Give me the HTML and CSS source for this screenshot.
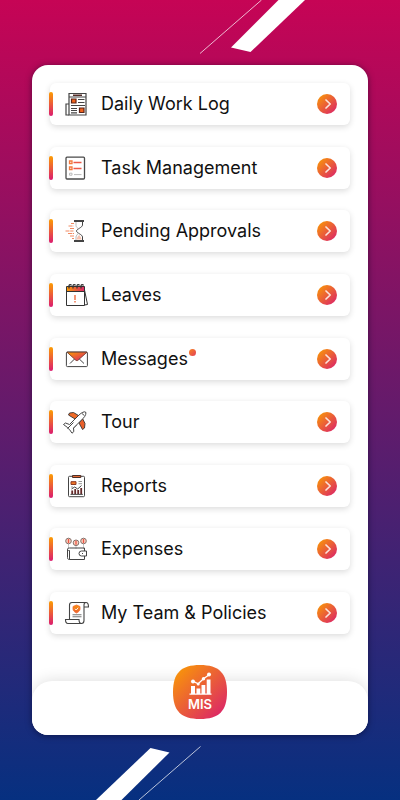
FILE: index.html
```html
<!DOCTYPE html>
<html lang="en">
<head>
<meta charset="utf-8">
<meta name="viewport" content="width=device-width, initial-scale=1">
<title>MIS</title>
<link rel="stylesheet" href="styles.css">
</head>
<body>
<svg class="defs" width="0" height="0" aria-hidden="true">
  <defs>
    <linearGradient id="warm" x1="0" y1="0" x2="1" y2="1">
      <stop offset="0" stop-color="#fb9f00"/><stop offset="1" stop-color="#d91c70"/>
    </linearGradient>
    <linearGradient id="warmV" gradientUnits="userSpaceOnUse" x1="0" y1="2" x2="0" y2="23">
      <stop offset="0" stop-color="#fb9f00"/><stop offset="1" stop-color="#d91c70"/>
    </linearGradient>
    <linearGradient id="warmH" gradientUnits="userSpaceOnUse" x1="2" y1="0" x2="22" y2="0">
      <stop offset="0" stop-color="#fb9f00"/><stop offset="1" stop-color="#d91c70"/>
    </linearGradient>
    <symbol id="go" viewBox="0 0 20 20">
      <circle cx="10" cy="10" r="10" fill="url(#warm)"/>
      <path d="M9 6 13.200 10 9 14" fill="none" stroke="#fbe3dc" stroke-width="1.700" stroke-linecap="round" stroke-linejoin="round"/>
    </symbol>
  </defs>
</svg>
<div class="screen">
  <svg class="slash slash-top" viewBox="0 0 110 56" aria-hidden="true">
    <path d="M78.500 0H105L50.500 52 31 47.500Z" fill="#fff"/>
    <path d="M61.500 0 0 53.500" stroke="#fff" stroke-width=".8" stroke-opacity=".9"/>
  </svg>
  <svg class="slash slash-bottom" viewBox="0 0 110 56" aria-hidden="true">
    <path d="M2 56 56.500 4l19 4.500L27.500 56Z" fill="#fff"/>
    <path d="M45 56 106.500 2.500" stroke="#fff" stroke-width=".8" stroke-opacity=".9"/>
  </svg>
  <main class="panel">
    <nav class="menu">
      <a class="item" href="#">
        <svg class="icon" viewBox="0 0 24 24" fill="none" stroke="#444" stroke-width="1.200">
          <path d="M5 1.500h17v21.500H5z"/><path d="M5 12H2v11h3M5 5h17"/>
          <path d="M9 3.300h9" stroke="#552c27" stroke-width="1.500"/>
          <path d="M7.500 7h4.500v4H7.500zM15.500 16H20v4.500h-4.500z" fill="#f1631d" stroke="#5b2419"/>
          <path d="M14 7.500h6.500M14 10.500h6.500M7 13.500h14M7 16.500h6M7 18.500h6M7 20.800h6"/>
        </svg>
        <span class="label">Daily Work Log</span>
        <svg class="go" aria-hidden="true"><use href="#go"/></svg>
      </a>
      <a class="item" href="#">
        <svg class="icon" viewBox="0 0 24 24" fill="none">
          <rect x="2" y="1.200" width="18.500" height="21.800" rx="1" stroke="#4a4a4a" stroke-width="1.300"/>
          <path d="M5.500 5h2.500v2.500H5.500zM5.500 11h2.500v2.500H5.500z" stroke="#f3793d" stroke-width="1.300"/>
          <path d="M9.500 6.500h8M9.500 12.500h8" stroke="#ec5948" stroke-width="1.400"/>
          <path d="M5.500 17.200h2.500v2H5.500zM10 18.600h7.500" stroke="#bbb"/>
        </svg>
        <span class="label">Task Management</span>
        <svg class="go" aria-hidden="true"><use href="#go"/></svg>
      </a>
      <a class="item" href="#">
        <svg class="icon" viewBox="0 0 24 24" fill="none" stroke="#444">
          <path d="M10 2h10M10 22h10" stroke-width="2"/>
          <path d="M18.500 3v3c0 2.500-6 4-6 6s6 3.500 6 6v3"/>
          <path d="M12 3v3.500c0 1.500 1.500 2.500 2.500 3.500M12 21v-3c0-1.500 1.500-2.500 2.500-4" stroke="#aaa" stroke-width=".8"/>
          <path d="M12.500 20.500c.5-2.500 1.500-3.500 2.700-4.500.9 1.200 2 2.200 2.400 4.500z" fill="#f7c3b1" stroke="none"/>
          <path d="M7 4.500h3M4.500 7h5M6 9.500h4.500M1.500 12h8M4 14.500h6M6 17h4M8 19.500h2" stroke="#f28a62" stroke-dasharray="4 .7"/>
        </svg>
        <span class="label">Pending Approvals</span>
        <svg class="go" aria-hidden="true"><use href="#go"/></svg>
      </a>
      <a class="item" href="#">
        <svg class="icon" viewBox="0 0 24 24" fill="none" stroke="#333">
          <path d="m20.500 7 3 14.500-3 .5"/>
          <path d="M2.500 3.500h18v5h-18z" fill="url(#warmH)"/>
          <path d="M2.500 8v14.500h18V8"/>
          <path d="M5 5.500v-3a1.300 1.300 0 0 1 2.500 0M9 5.500v-3a1.300 1.300 0 0 1 2.500 0M13 5.500v-3a1.300 1.300 0 0 1 2.500 0M17 5.500v-3a1.300 1.300 0 0 1 2.500 0" stroke-width="1.200"/>
          <path d="M11 12v5M11 18v1.500" stroke="#ef6b3f" stroke-width="1.400"/>
        </svg>
        <span class="label">Leaves</span>
        <svg class="go" aria-hidden="true"><use href="#go"/></svg>
      </a>
      <a class="item" href="#">
        <svg class="icon" viewBox="0 0 24 24" fill="none" stroke="#444">
          <rect x="2.400" y="5" width="21" height="14.600" rx="1"/>
          <path d="M3 5.200h20l-9.300 8.300h-1.600z" fill="url(#warm)" stroke="#6b3427" stroke-width=".8"/>
          <path d="m6 16.500 4.500-4.500M20 16.500 15.300 12"/>
        </svg>
        <span class="label">Messages<i class="dot"></i></span>
        <svg class="go" aria-hidden="true"><use href="#go"/></svg>
      </a>
      <a class="item" href="#">
        <svg class="icon" viewBox="0 0 24 24" fill="none" stroke="#333" stroke-width=".9" stroke-linejoin="round">
          <path d="m14.500 5.500-5-3-4 .5L4.500 5 11 9z" fill="#ef6b28"/>
          <path d="m15 13 3.500 6.500 2-1.500.5-4.500-2.500-5z" fill="#e9602b"/>
          <path d="M5.500 14.500 15 5c2.500-2.500 5.500-3.700 6.500-3s.2 4-2.500 6.500L9.500 18z" fill="#fff"/>
          <path d="m5.500 14.500-4-1.500-2 1.500 4 3 .8 1.200 1.200.8L8 23.200l1.800-1.600L9.500 18l3-3M3.500 18.500l6-6" fill="#fff"/>
          <path d="m18 3.500 2.300 2"/>
        </svg>
        <span class="label">Tour</span>
        <svg class="go" aria-hidden="true"><use href="#go"/></svg>
      </a>
      <a class="item" href="#">
        <svg class="icon" viewBox="0 0 24 24" fill="none" stroke="#444">
          <rect x="4.500" y="2.300" width="16" height="20.400" rx="1"/>
          <path d="M8.500 1.500h8.300v2H8.500z" fill="#e56a34" stroke="#4d3029"/>
          <path d="M7 7.700h5v2.800H7z" fill="#f07426" stroke="#8b3b25"/>
          <path d="M14.500 7.500h3.500M14.500 9.700h3.500M7 13h2" stroke="#999"/>
          <path d="M8.200 20v-3.500M11.200 20v-5M14.200 20v-4M17.200 20v-6" stroke="#652b2b" stroke-width="1.800"/>
          <path d="m7.500 15 3.200-2 3 2L17.500 11.500M6.500 20.400h12.300" stroke="#333" stroke-width=".9"/>
        </svg>
        <span class="label">Reports</span>
        <svg class="go" aria-hidden="true"><use href="#go"/></svg>
      </a>
      <a class="item" href="#">
        <svg class="icon" viewBox="0 0 24 24" fill="none" stroke="#444">
          <path d="M4.500 7v5M12 9v3M19.500 7v5" stroke="#bbb" stroke-width=".8"/>
          <g fill="#fbd3c0" stroke="#85716b"><circle cx="4.500" cy="4" r="2.800"/><circle cx="12" cy="5.800" r="2.800"/><circle cx="19.500" cy="4" r="2.800"/></g>
          <path d="M4.500 2v4M12 3.800v4M19.500 2v4" stroke="#ee5446" stroke-width="1.300"/>
          <path d="M20.500 14v-3H5.500c-1.500 0-2 .4-2 1.500v8c0 1.300.5 2 2 2h15V19M3.500 12.500c.3 1 1 1 2 1v9"/>
          <path d="M22.500 14h-5a2.500 2.500 0 0 0 0 5h5zM18 16.500h1" fill="#fff"/>
        </svg>
        <span class="label">Expenses</span>
        <svg class="go" aria-hidden="true"><use href="#go"/></svg>
      </a>
      <a class="item" href="#">
        <svg class="icon" viewBox="0 0 24 24" fill="none" stroke="#444" stroke-width="1.100">
          <path d="M5.500 18V4c0-1.700.8-2.500 2.500-2.500h14c2 0 2.500 1.500 2.500 4.500h-4.500"/>
          <path d="M22 1.500c-1.500 0-2 1-2 2.500v15.500c0 2-1 3-2.500 3s-2.500-1-2.500-4H1.500c0 3 .8 4 2.500 4h13.500"/>
          <path d="m12.500 4 3.500 1.500V8c0 1.800-1.500 3-3.500 4-2-1-3.500-2.200-3.500-4V5.500z" fill="url(#warmV)" stroke="#f46f35" stroke-width=".8"/>
          <path d="m11 7.800 1.200 1.200 2-2.300" stroke="#fff" stroke-width=".9"/>
          <path d="M8.500 13.800h9M8.500 15.800h9" stroke="#777"/>
        </svg>
        <span class="label">My Team &amp; Policies</span>
        <svg class="go" aria-hidden="true"><use href="#go"/></svg>
      </a>
    </nav>
    <footer class="bar">
      <button class="mis" type="button">
        <svg class="tile" viewBox="0 0 54 54" aria-hidden="true">
          <path d="M27 0C46 0 54 8 54 27S46 54 27 54 0 46 0 27 8 0 27 0Z" fill="url(#warm)"/>
        </svg>
        <svg class="chart" viewBox="0 0 24 24" fill="#fff" aria-hidden="true">
          <path d="M1.500 21.500h22v1.300h-22zM3 14h4v8H3zM8.500 16.500h3.800V22H8.500zM13.500 13h3.800v9h-3.800zM18.700 7.500h3.800V22h-3.800z"/>
          <path d="m4.700 9.200 5.500 2.600 5-4.800 6.300-4.500" fill="none" stroke="#fff" stroke-width="1.300"/>
          <circle cx="5" cy="9.500" r="2"/><circle cx="10.200" cy="12" r="1.500"/><circle cx="15.500" cy="6.700" r="1.700"/><circle cx="21" cy="2.500" r="2"/>
        </svg>
        <span class="name">MIS</span>
      </button>
    </footer>
  </main>
</div>
</body>
</html>
```

FILE: styles.css
```css
* {
  box-sizing: border-box;
}

body {
  margin: 0;
  font-family: Inter, "Liberation Sans", sans-serif;
  color: #111;
}

.defs {
  position: absolute;
}

.screen {
  position: relative;
  display: flex;
  min-height: 100vh;
  padding: 65px 8%;
  background: linear-gradient(#c60455, #063080);
  overflow: hidden;
}

.slash {
  position: absolute;
  width: 110px;
  height: 56px;
}

.slash-top {
  top: 0;
  left: 50%;
}

.slash-bottom {
  bottom: 0;
  right: 49%;
}

.panel {
  position: relative;
  flex: 1;
  display: flex;
  flex-direction: column;
  border-radius: 16px;
  background: #fff;
  box-shadow: 0 1px 6px rgba(0, 0, 30, 0.5);
  overflow: hidden;
}

.menu {
  flex: 1;
  display: flex;
  flex-direction: column;
  justify-content: space-between;
  gap: 12px;
  padding: 18px 18px 47px;
}

.item {
  display: flex;
  align-items: center;
  height: 42px;
  padding-right: 13px;
  border-radius: 6px;
  background: #fff;
  box-shadow: 0 2px 6px rgba(0, 0, 0, 0.14);
  color: inherit;
  text-decoration: none;
}

.item::before {
  content: "";
  width: 4px;
  height: 24px;
  margin-left: -1px;
  border-radius: 2px;
  background: linear-gradient(#fc9d02, #db1b70);
}

.icon {
  width: 24px;
  height: 24px;
  margin: 0 13px 0 11px;
  overflow: visible;
}

.label {
  position: relative;
  margin-right: auto;
  font-size: 18px;
  line-height: 24px;
  white-space: nowrap;
}

.dot {
  position: absolute;
  top: 2px;
  right: -8px;
  width: 7px;
  height: 7px;
  border-radius: 50%;
  background: linear-gradient(135deg, #f8831e, #e33f5c);
}

.go {
  width: 20px;
  height: 20px;
}

.bar {
  display: flex;
  justify-content: center;
  height: 54px;
  border-radius: 20px 20px 0 0;
  background: #fff;
  box-shadow: 0 0 16px rgba(0, 0, 0, 0.14);
}

.mis {
  position: relative;
  display: flex;
  flex-direction: column;
  align-items: center;
  width: 54px;
  height: 54px;
  margin-top: -16px;
  padding: 7px 0 0;
  border: 0;
  background: none;
  color: #fff;
  font: 600 13px/16px Inter, "Liberation Sans", sans-serif;
}

.tile {
  position: absolute;
  inset: 0;
}

.chart,
.name {
  position: relative;
}

.chart {
  width: 24px;
  height: 24px;
}
```
